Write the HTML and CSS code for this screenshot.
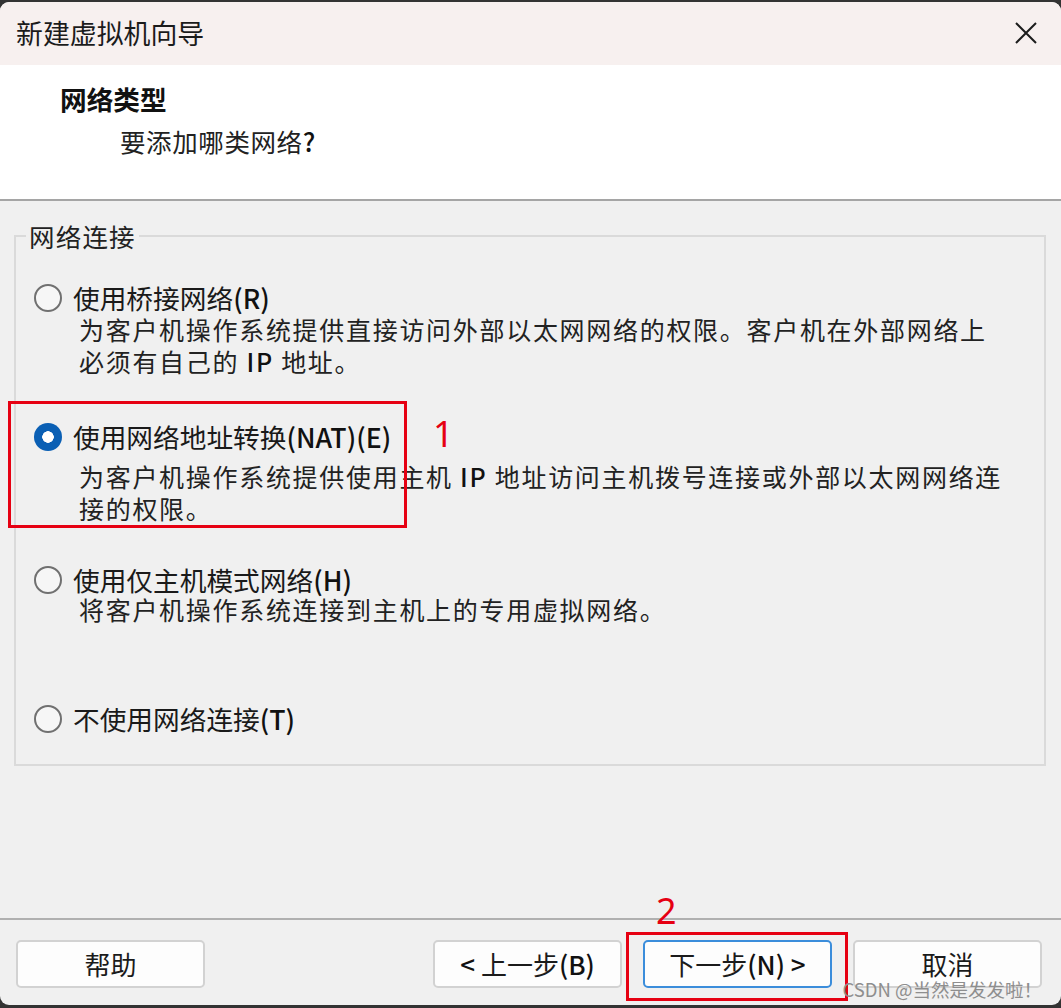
FILE: index.html
```html
<!DOCTYPE html>
<html lang="zh-CN">
<head>
<meta charset="utf-8">
<title>新建虚拟机向导</title>
<link rel="stylesheet" href="styles.css">
</head>
<body>
<div class="window">
  <div class="titlebar">
    <span class="title">新建虚拟机向导</span>
    <svg class="close" width="24" height="24" viewBox="0 0 24 24" aria-label="关闭">
      <path d="M2 2 L22 22 M22 2 L2 22" stroke="#1c1c1c" stroke-width="2" fill="none"/>
    </svg>
  </div>

  <div class="header">
    <div class="h-title">网络类型</div>
    <div class="h-sub">要添加哪类网络<span class="key">?</span></div>
  </div>

  <div class="main">
    <fieldset class="group">
      <legend class="legend">网络连接</legend>

      <div class="opt">
        <div class="opt-row"><span class="radio"></span><span class="opt-label">使用桥接网络<span class="key">(R)</span></span></div>
        <div class="desc">为客户机操作系统提供直接访问外部以太网网络的权限。客户机在外部网络上<br>必须有自己的 <span class="key">IP</span> 地址。</div>
      </div>

      <div class="opt opt-nat">
        <div class="opt-row"><span class="radio radio-on"></span><span class="opt-label">使用网络地址转换<span class="key">(NAT)(E)</span></span></div>
        <div class="desc desc-nat">为客户机操作系统提供使用主机 <span class="key">IP</span> 地址访问主机拨号连接或外部以太网网络连<br>接的权限。</div>
      </div>

      <div class="opt opt-host">
        <div class="opt-row"><span class="radio"></span><span class="opt-label">使用仅主机模式网络<span class="key">(H)</span></span></div>
        <div class="desc desc-host">将客户机操作系统连接到主机上的专用虚拟网络。</div>
      </div>

      <div class="opt opt-none">
        <div class="opt-row"><span class="radio"></span><span class="opt-label">不使用网络连接<span class="key">(T)</span></span></div>
      </div>
    </fieldset>
  </div>

  <div class="footer">
    <button class="btn">帮助</button>
    <div class="btn-group">
      <button class="btn"><span class="key">&lt;</span> 上一步<span class="key">(B)</span></button>
      <button class="btn btn-default">下一步<span class="key">(N) &gt;</span></button>
      <button class="btn">取消</button>
    </div>
  </div>

  <div class="mark mark-box1"></div>
  <div class="mark-num mark-num1">1</div>
  <div class="mark mark-box2"></div>
  <div class="mark-num mark-num2">2</div>
  <div class="watermark">CSDN @当然是发发啦！</div>
</div>
</body>
</html>
```

FILE: styles.css
```css
html, body {
  margin: 0;
  padding: 0;
  background: #333333;
}

body {
  font-family: "Noto Sans CJK SC", "Noto Sans", sans-serif;
  color: #1a1a1a;
}

.window {
  position: relative;
  margin-top: 2px;
  width: 1061px;
  height: 1003px;
  border-radius: 9px;
  overflow: hidden;
  background: #f0f0f0;
  display: flex;
  flex-direction: column;
}

.titlebar {
  height: 63px;
  flex: none;
  background: #f7f0ef;
  display: flex;
  align-items: center;
  justify-content: space-between;
  padding: 0 23px 2px 16px;
  box-sizing: border-box;
}

.title {
  font-size: 26.9px;
  line-height: 32px;
  color: #1b1b1b;
}

.close {
  display: block;
  width: 24px;
  height: 24px;
}

.header {
  flex: none;
  height: 136px;
  box-sizing: border-box;
  background: #ffffff;
  border-bottom: 2px solid #a5a5a5;
  padding: 18px 0 0 60px;
}

.h-title {
  font-size: 26.7px;
  line-height: 32px;
  font-weight: 700;
  color: #111;
}

.h-sub {
  font-size: 25.5px;
  line-height: 32px;
  margin: 10px 0 0 60px;
  letter-spacing: 0.6px;
  color: #222;
}

.key {
  font-weight: 500;
  color: #111;
}

.main {
  flex: 1;
  padding-top: 20px;
}

.group {
  margin: 0 15px 0 14px;
  padding: 32px 0 30px 10px;
  border: 2px solid #dadada;
  min-width: 0;
}

.legend {
  padding: 0 3px;
  font-size: 25.5px;
  line-height: 30px;
  letter-spacing: 1.2px;
  color: #222;
}

.opt {
  padding-left: 8px;
}

.opt-nat {
  margin-top: 45px;
}

.opt-host {
  margin-top: 41px;
}

.opt-none {
  margin-top: 81px;
}

.opt-row {
  display: flex;
  align-items: center;
  height: 30px;
  gap: 11px;
}

.radio {
  width: 28px;
  height: 28px;
  box-sizing: border-box;
  border-radius: 50%;
  border: 2px solid #707070;
  background: #f6f6f6;
  flex: none;
}

.radio-on {
  border: none;
  background: radial-gradient(circle, #ffffff 0 5.5px, #0a5fb4 6px);
}

.opt-label {
  font-size: 26.7px;
  line-height: 30px;
  white-space: nowrap;
  color: #1a1a1a;
}

.desc {
  padding-left: 45px;
  font-size: 25px;
  line-height: 32px;
  letter-spacing: 1.7px;
  white-space: nowrap;
  color: #222;
}

.desc-nat {
  margin-top: 8px;
}

.desc-host {
  line-height: 28px;
}

.footer {
  flex: none;
  height: 87px;
  box-sizing: border-box;
  border-top: 2px solid #b0b0b0;
  padding: 20px 19px 0 16px;
  display: flex;
  align-items: flex-start;
}

.btn-group {
  margin-left: auto;
  display: flex;
  gap: 21px;
}

.btn {
  width: 189px;
  height: 48px;
  box-sizing: border-box;
  border: 2px solid #d2d2d2;
  border-radius: 5px;
  background: #fdfdfd;
  font-family: "Noto Sans CJK SC", "Noto Sans", sans-serif;
  font-size: 26px;
  line-height: 30px;
  color: #1b1b1b;
  padding: 0;
}

.btn-default {
  border-color: #3b8ddb;
}

.mark {
  position: absolute;
  border: 3px solid #e60012;
  box-sizing: border-box;
}

.mark-box1 {
  left: 8px;
  top: 399px;
  width: 399px;
  height: 127px;
}

.mark-box2 {
  left: 626px;
  top: 930px;
  width: 222px;
  height: 69px;
}

.mark-num {
  position: absolute;
  font-family: "Noto Sans", sans-serif;
  font-size: 36px;
  line-height: 36px;
  color: #e60012;
}

.mark-num1 {
  left: 433px;
  top: 414px;
}

.mark-num2 {
  left: 656px;
  top: 891px;
}

.watermark {
  position: absolute;
  right: 19px;
  top: 977px;
  font-size: 18.5px;
  line-height: 20px;
  color: #8e8e8e;
  white-space: nowrap;
}
```
